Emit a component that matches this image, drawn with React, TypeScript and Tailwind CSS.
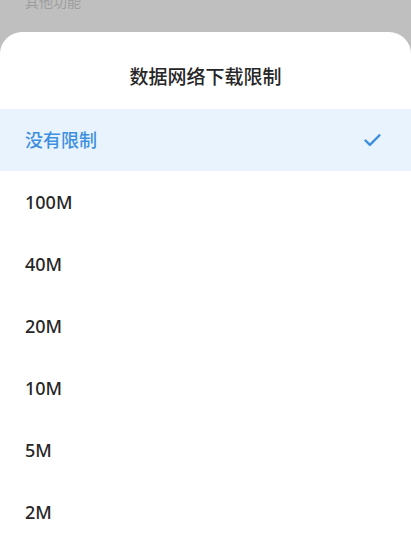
import { Check } from "lucide-react";

const options = ["没有限制", "100M", "40M", "20M", "10M", "5M", "2M"];

export default function App() {
  const selected = 0;

  return (
    <div
      className="w-[411px] h-[543px] overflow-hidden bg-[#bfbfbf] flex flex-col"
      style={{ fontFamily: '"Noto Sans", "Noto Sans CJK SC", sans-serif' }}
    >
      {/* page behind the dimmed overlay */}
      <div className="h-[32px] shrink-0 overflow-hidden px-[25px]">
        <div className="-mt-[6px] text-[14px] leading-[16px] text-[#9d9d9d]">其他功能</div>
      </div>

      {/* bottom sheet */}
      <div className="flex-1 bg-white rounded-t-[22px] flex flex-col">
        <div className="h-[77px] shrink-0 flex items-center justify-center text-[19px] font-medium text-[#262626] pt-[14px]">
          数据网络下载限制
        </div>
        <ul className="flex flex-col">
          {options.map((opt, i) => (
            <li
              key={opt}
              className={`h-[62px] shrink-0 flex items-center justify-between pl-[25px] pr-[28px] ${
                i === selected ? "bg-[#e9f3fd] text-[#3d8fe0]" : "text-[#262626]"
              }`}
            >
              <span className="text-[18px] font-medium">{opt}</span>
              {i === selected && <Check size={21} strokeWidth={2.8} className="text-[#3d8fe0]" />}
            </li>
          ))}
        </ul>
      </div>
    </div>
  );
}
